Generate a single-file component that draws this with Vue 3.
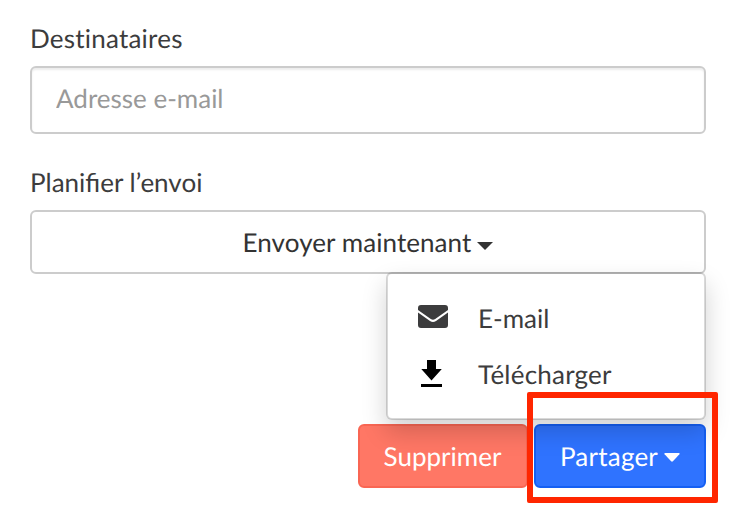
<script setup>
import { ref } from 'vue'

const email = ref('')
const actions = [
  { id: 'mail', label: 'E-mail' },
  { id: 'download', label: 'Télécharger' },
]
</script>

<template>
  <main class="form">
    <label class="label plain" for="email">Destinataires</label>
    <input id="email" v-model="email" class="input" type="text" placeholder="Adresse e-mail" />

    <div class="label second">Planifier l’envoi</div>
    <button class="select" type="button">
      <span>Envoyer maintenant</span>
      <svg class="caret" width="16" height="8" viewBox="0 0 16 8"><path d="M0 0h16L8 8z" /></svg>
    </button>

    <footer class="footer">
      <button class="btn danger" type="button">Supprimer</button>
      <div class="share">
        <button class="btn primary" type="button">
          <span>Partager</span>
          <svg class="caret" width="16" height="9" viewBox="0 0 16 9"><path d="M1.2 0h13.6q1.4.2.6 1.3L8.9 8.3q-.9.8-1.8 0L.6 1.3Q-.2.2 1.2 0z" /></svg>
        </button>
        <ul class="menu">
          <li v-for="a in actions" :key="a.id" class="item" :class="a.id">
            <svg v-if="a.id === 'mail'" class="icon" width="30" height="23" viewBox="0 0 30 23">
              <path fill="#3c3c3d" d="M3 0h24a3 3 0 0 1 3 3v2.1L17.2 14.1q-2.2 1.5-4.4 0L0 5.1V3a3 3 0 0 1 3-3zM0 7.5l12 8.6q3 1.9 6 0L30 7.5V20a3 3 0 0 1-3 3H3a3 3 0 0 1-3-3z" />
            </svg>
            <svg v-else class="icon arrow" width="22" height="27" viewBox="0 0 22 27">
              <path d="M6 0h9v9h5.8L10.5 20.5.3 9H6zM0 24h21v3H0z" />
            </svg>
            <span>{{ a.label }}</span>
          </li>
        </ul>
        <div class="highlight"></div>
      </div>
    </footer>
  </main>
</template>

<style>
body {
  margin: 0;
  background: #fff;
}
</style>

<style scoped>
.form {
  box-sizing: border-box;
  width: 736px;
  height: 512px;
  padding: 20px 30px 0;
  overflow: hidden;
  font-family: Lato, sans-serif;
  font-size: 26px;
  line-height: 36px;
  color: #3c3c3d;
  text-rendering: geometricPrecision;
}
.label {
  display: block;
  height: 36px;
  margin-bottom: 10px;
}
.plain {
  font-variant-ligatures: none;
  letter-spacing: 0.22px;
}
.second {
  margin-top: 30px;
}
.input,
.select,
.btn {
  box-sizing: border-box;
  border: 2px solid #ccc;
  border-radius: 6px;
  font: inherit;
  text-rendering: inherit;
}
.input {
  display: block;
  width: 100%;
  height: 68px;
  padding: 0 24px 4px;
  background: #fff;
  box-shadow: inset 0 2px 2px rgba(0, 0, 0, 0.075);
  outline: none;
}
.input::placeholder {
  color: #999;
  opacity: 1;
}
.select,
.btn {
  display: flex;
  align-items: center;
  justify-content: center;
  gap: 6px;
  height: 64px;
  padding: 0;
}
.select {
  width: 100%;
  background: #fff;
  color: #333;
  letter-spacing: 0.07px;
}
.caret {
  margin-top: 7px;
  fill: currentColor;
}
.footer {
  display: flex;
  justify-content: flex-end;
  gap: 6px;
  margin-top: 150px;
}
.btn {
  width: 172px;
  color: #fff;
}
.danger {
  width: 170px;
  padding-right: 1px;
  border-color: #f96653;
  background: #ff7765;
}
.primary {
  border-color: #155ff3;
  background: #2f73ff;
  letter-spacing: 0.22px;
}
.primary .caret {
  margin-top: 2px;
}
.share {
  position: relative;
}
.menu {
  position: absolute;
  right: 0;
  bottom: 68px;
  box-sizing: border-box;
  width: 320px;
  height: 148px;
  margin: 0;
  padding: 16px 0;
  border: 2px solid rgba(0, 0, 0, 0.15);
  border-radius: 6px;
  background: #fff;
  background-clip: padding-box;
  box-shadow: 0 12px 24px rgba(0, 0, 0, 0.175);
  list-style: none;
}
.item {
  display: flex;
  align-items: center;
  height: 56px;
  padding-left: 30px;
}
.download {
  letter-spacing: 0.22px;
}
.icon {
  flex: none;
  margin: 0 30px 3px 0;
}
.arrow {
  margin: 0 35px 1px 3px;
}
.highlight {
  position: absolute;
  top: -32px;
  left: -7px;
  box-sizing: border-box;
  width: 191px;
  height: 111px;
  border: 6px solid #ff2600;
  border-radius: 2px;
}
</style>
